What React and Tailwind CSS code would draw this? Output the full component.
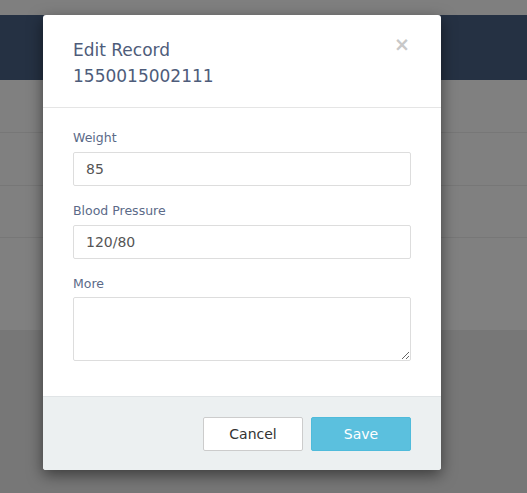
import React from 'react'

const font = { fontFamily: '"DejaVu Sans", "Noto Sans", sans-serif' }

const Field = ({ label, children, gap = 'mb-[5px]' }) => (
  <div className="mb-[15px]">
    <label className={`block text-[12.5px] leading-[19px] text-[#5b6a88] ${gap}`}>{label}</label>
    {children}
  </div>
)

const App = () => {
  return (
    <div className="relative w-[527px] h-[493px] overflow-hidden bg-[#7f7f7f]" style={font}>
      {/* page behind the overlay */}
      <div className="flex flex-col h-full">
        <div className="h-[15px] bg-[#7f7f7f]"></div>
        <div className="h-[65px] bg-[#253143]"></div>
        <div className="h-[53px] bg-[#808080] border-b border-[#777]"></div>
        <div className="h-[53px] bg-[#808080] border-b border-[#777]"></div>
        <div className="h-[52px] bg-[#808080] border-b border-[#777]"></div>
        <div className="h-[92px] bg-[#808080]"></div>
        <div className="flex-1 bg-[#777777]"></div>
      </div>

      {/* modal */}
      <div className="absolute left-[43px] top-[15px] w-[398px] bg-white rounded-[3px] shadow-[0_5px_15px_rgba(0,0,0,0.5)] overflow-hidden">
        <div className="relative px-[30px] pt-[22px] h-[93px] border-b border-[#e5e5e5]">
          <h4 className="text-[17px] leading-[26px] text-[#4e5c7a]">
            Edit Record
            <br />
            1550015002111
          </h4>
          <button className="absolute right-[31px] top-[20px] text-[#c8c8c8] text-[19px] font-bold leading-none">×</button>
        </div>

        <div className="px-[30px] pt-[20px] pb-[20px]">
          <Field label="Weight">
            <input
              defaultValue="85"
              className="block w-full h-[34px] px-[12px] border border-[#dddddd] rounded-[2px] text-[14px] text-[#555] outline-none"
              style={font}
            />
          </Field>
          <Field label="Blood Pressure">
            <input
              defaultValue="120/80"
              className="block w-full h-[34px] px-[12px] border border-[#dddddd] rounded-[2px] text-[14px] text-[#555] outline-none"
              style={font}
            />
          </Field>
          <Field label="More" gap="mb-[4px]">
            <textarea
              className="block w-full h-[64px] px-[12px] py-[6px] border border-[#dddddd] rounded-[2px] text-[14px] text-[#555] outline-none"
              style={font}
            ></textarea>
          </Field>
        </div>

        <div className="flex justify-end gap-[8px] px-[30px] pt-[20px] pb-[19px] bg-[#ecf0f1] border-t border-[#e0e4e6]">
          <button className="w-[100px] h-[34px] bg-white border border-[#cccccc] rounded-[2px] text-[14px] text-[#333]">Cancel</button>
          <button className="w-[100px] h-[34px] bg-[#5bc0de] border border-[#4fbbdb] rounded-[2px] text-[14px] text-white">Save</button>
        </div>
      </div>
    </div>
  )
}

export default App
